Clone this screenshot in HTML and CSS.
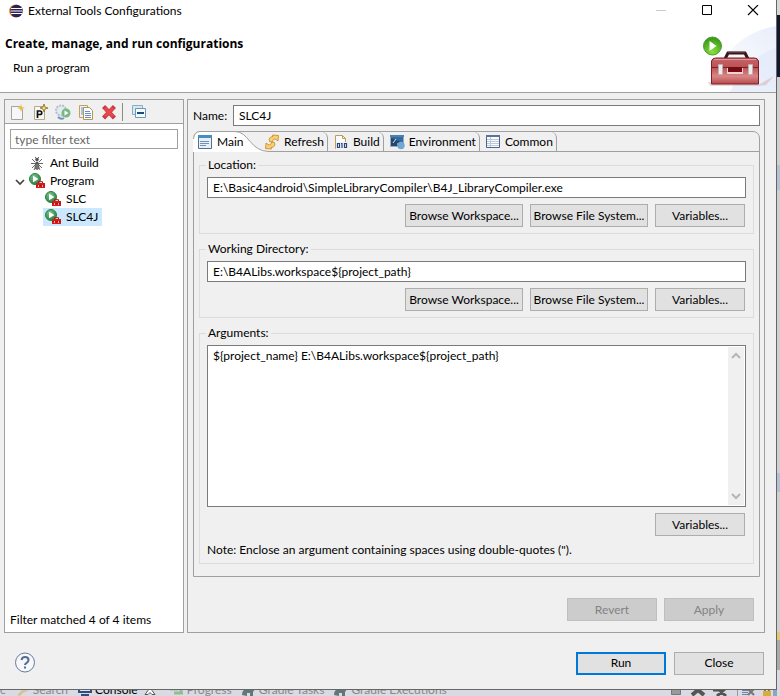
FILE: index.html
```
<!DOCTYPE html>
<html lang="en">
<head>
<meta charset="utf-8">
<title>External Tools Configurations</title>
<link rel="stylesheet" href="styles.css">
</head>
<body>
<svg class="defs" aria-hidden="true">
  <defs>
    <radialGradient id="green" cx=".4" cy=".3" r=".8"><stop offset="0" stop-color="#7cc58a"/><stop offset="1" stop-color="#1c7a35"/></radialGradient>
    <radialGradient id="lime" cx=".5" cy=".85" r=".9"><stop offset="0" stop-color="#8be03a"/><stop offset="1" stop-color="#2c8f10"/></radialGradient>
    <linearGradient id="box" x1="0" y1="0" x2="0" y2="1"><stop offset="0" stop-color="#c4666a"/><stop offset=".35" stop-color="#bd5055"/><stop offset=".7" stop-color="#d98686"/><stop offset="1" stop-color="#b8484c"/></linearGradient>
    <linearGradient id="swoosh" x1="0" y1="1" x2="1" y2="0"><stop offset="0" stop-color="#fff"/><stop offset="1" stop-color="#dfe7f8"/></linearGradient>
    <symbol id="runtool" viewBox="0 0 16 16">
      <circle cx="6" cy="6" r="5.500" fill="url(#green)" stroke="#2c8045"/>
      <path d="M4 2.800L9.500 6L4 9.200z" fill="#fff"/>
      <path d="M7 10h9v5H7z" fill="#d81a1a"/><path d="M9.500 10V8.700h4V10M7 12.500h9" fill="none" stroke="#a81515"/><path d="M9 12h1v2H9zM13 12h1v2h-1z" fill="#ffb0a0"/>
    </symbol>
  </defs>
</svg>
<div class="desktop">
  <main class="dialog">
    <header class="titlebar">
      <svg width="16" height="16" viewBox="0 0 16 16"><circle cx="7.500" cy="8" r="6.500" fill="#f09030"/><circle cx="8.500" cy="8" r="6.300" fill="#2c2255"/><path d="M3 5.500h11M2.500 8h12M3 10.500h11" stroke="#fff" stroke-width="1.200"/></svg>
      <h1>External Tools Configurations</h1>
      <div class="winbuttons">
        <button type="button" aria-label="Minimize"><svg width="12" height="12"><path d="M1 5.500h10" stroke="#ccc"/></svg></button>
        <button type="button" aria-label="Maximize"><svg width="12" height="12"><path d="M1.500 .5h9v9h-9z" fill="none" stroke="#000"/></svg></button>
        <button type="button" aria-label="Close window"><svg width="12" height="12"><path d="M1 0l10 10M11 0L1 10" stroke="#000" stroke-width="1.100"/></svg></button>
      </div>
    </header>
    <section class="banner">
      <div>
        <h2>Create, manage, and run configurations</h2>
        <p>Run a program</p>
      </div>
      <svg class="toolbox" width="76" height="71" viewBox="0 0 76 71">
        <path d="M8 71C20 30 46 10 76 5v66z" fill="url(#swoosh)" opacity=".7"/>
        <path d="M30 71C42 46 56 34 76 27v44z" fill="#dfe7f8" opacity=".6"/>
        <path d="M8 61l52 2 14-8-8 9-8 1H10z" fill="#b88" opacity=".3"/>
        <path d="M25 38l3-6h17l3 6" fill="none" stroke="#3d1418" stroke-width="3"/><path d="M28 31h17" stroke="#7c5c60"/>
        <path d="M11.500 63V40q1-3 4-3h39q3 0 4 3v23z" fill="url(#box)" stroke="#7e2026"/>
        <path d="M12 46.500h46" stroke="#7a2228"/><path d="M14 38.500h42" stroke="#dc9a9a"/>
        <path d="M27 47h16v6H27z" fill="#f1d0d0"/><path d="M28 46h14v5H28z" fill="#750c12"/>
        <path d="M18.500 43.500h4v10h-4zM48.500 43.500h4v10h-4z" fill="#efedec" stroke="#b9b2b0"/>
        <circle cx="12.500" cy="25" r="9" fill="url(#lime)" stroke="#4f9a3a"/>
        <path d="M9.500 20v10l7-5z" fill="#fff"/>
      </svg>
    </section>
    <div class="content">
      <aside class="tree-pane">
        <div class="toolbar">
          <button type="button" aria-label="New configuration"><svg width="16" height="16"><path d="M2.500 2.500h8l3 3v10h-11z" fill="#f4f7fb" stroke="#aaa58c"/><path d="M12 0l1 3 3 1-3 1-1 3-1-3-3-1 3-1z" fill="#e8bd48"/></svg></button>
          <button type="button" aria-label="New prototype"><svg width="16" height="16"><path d="M2.500 2.500h10v13h-10z" fill="#f4f7fb" stroke="#b9a978"/><path d="M5.500 14V7h2.500a1.500 1.500 0 010 3.500H6" fill="none" stroke="#111" stroke-width="1.700"/><path d="M12 0l1 3 3 1-3 1-1 3-1-3-3-1 3-1z" fill="#f7d877" stroke="#7b5c16" stroke-width=".7"/></svg></button>
          <button type="button" aria-label="Export"><svg width="16" height="16"><circle cx="6" cy="6.500" r="5" fill="#e5e9f0" stroke="#b6bfcd" stroke-width="2" stroke-dasharray="2 1"/><path d="M3 13q3 3 6 1" fill="none" stroke="#7892b5" stroke-width="2"/><circle cx="11" cy="9" r="4.500" fill="#76b887"/><path d="M9.500 6.500l4 2.500-4 2.500z" fill="#fff"/></svg></button>
          <button type="button" aria-label="Duplicate"><svg width="16" height="16"><path d="M1.500 1.500h8v12h-8z" fill="#edf3fb" stroke="#c1a45c"/><path d="M3 4h3M3 6h3M3 8h3M3 10h3" stroke="#6e8fc0"/><path d="M5.500 3.500h6l3 3v9h-9z" fill="#fafcff" stroke="#b7964b"/><path d="M7 7.500h5M7 9.500h6M7 11.500h6M7 13.500h6" stroke="#6e8fc0"/></svg></button>
          <button type="button" aria-label="Delete"><svg width="16" height="16"><path d="M4 4l8 8.500M12 4L4 12.500" stroke="#c63b42" stroke-width="4.200" stroke-linecap="square"/><path d="M4 4l8 8.500M12 4L4 12.500" stroke="#e5484d" stroke-width="3"/></svg></button>
          <span class="sep"></span>
          <button type="button" aria-label="Collapse all"><svg width="16" height="16"><path d="M1.500 1.500h10v9h-10z" fill="#d8e8f2" stroke="#8badc4"/><path d="M4.500 4.500h10v9h-10z" fill="#f5faff" stroke="#6d99b8"/><path d="M6 9h7" stroke="#184b80" stroke-width="2"/></svg></button>
        </div>
        <input class="filter" type="text" aria-label="Filter" placeholder="type filter text">
        <ul class="tree">
          <li><span class="twisty"></span><span class="node"><svg width="16" height="16"><path d="M6 2l2 2 2-2M3 4l3 3M13 4l-3 3M2 8.500h12M3 13l4-4M13 13L9 9M5 15l2-4M11 15l-2-4" stroke="#666" fill="none"/><circle cx="8" cy="4.500" r="1.800" fill="#555"/><circle cx="8" cy="8" r="1.600" fill="#555"/><ellipse cx="8" cy="12" rx="2" ry="2.500" fill="#777" stroke="#444" stroke-width=".6"/></svg>Ant Build</span></li>
          <li><svg class="twisty" width="10" height="18"><path d="M1 8l4 4 4-4" fill="none" stroke="#444" stroke-width="1.700"/></svg><span class="node"><svg width="16" height="16"><use href="#runtool"/></svg>Program</span></li>
          <li class="child"><span class="node"><svg width="16" height="16"><use href="#runtool"/></svg>SLC</span></li>
          <li class="child"><span class="node selected"><svg width="16" height="16"><use href="#runtool"/></svg>SLC4J</span></li>
        </ul>
        <p class="status">Filter matched 4 of 4 items</p>
      </aside>
      <section class="editor">
        <div class="name-row"><label for="name">Name:</label><input id="name" type="text" value="SLC4J"></div>
        <div class="folder">
          <div class="tabs" role="tablist">
            <button class="tab active" type="button" role="tab" aria-selected="true">
              <svg class="curve" width="76" height="21" viewBox="0 0 76 21"><path d="M0 21V7Q1 1 7 .5H42C56 .5 57 20.500 76 20.500V21z" fill="#fff"/><path d="M.5 8Q1 1 7 .5H42C56 .5 57 20.500 76 20.500" fill="none" stroke="#a0a0a0"/></svg>
              <svg width="16" height="16"><path d="M1.500 1.500h13v13h-13z" fill="#e5f0fa" stroke="#51718e"/><path d="M1 1h14v3H1z" fill="#438fc4"/><path d="M3 7.500h9M3 9.500h9M3 11.500h6" stroke="#7790b5"/></svg><span>Main</span></button>
            <button class="tab" type="button" role="tab"><svg width="16" height="16"><path d="M5.500 7.500Q4 3 9 2.500L8.500 1l6 .5L14 7l-2-1.500Q9 4 8.500 8z" fill="#f8cf72" stroke="#c68523" stroke-width=".8"/><path d="M10.500 8.500q1.500 4.500-3.500 5l.5 1.500-6-.5L2 9l2 1.500q3 1.500 3.500-2.500z" fill="#f8cf72" stroke="#c68523" stroke-width=".8"/></svg><span>Refresh</span></button>
            <button class="tab" type="button" role="tab"><svg width="16" height="16"><path d="M2.500 1.500h7l3 3v10h-10z" fill="#fafcff" stroke="#c09c52"/><path d="M9.500 1.500v3h3" fill="none" stroke="#c09c52"/><path d="M3 8h11v7H3z" fill="#f2f3f7"/><path d="M4.500 9.500h2v4h-2zM11.500 9.500h2v4h-2zM9 9v5M8 9.500h1" fill="none" stroke="#294779" stroke-width="1.200"/></svg><span>Build</span></button>
            <button class="tab" type="button" role="tab"><svg width="16" height="16"><path d="M1.500 1.500h13v11h-13z" fill="#346a9f" stroke="#9aabba"/><path d="M1 1h14v2H1z" fill="#4b81b2"/><path d="M2 4q6 2 12 5v3H2z" fill="#24466f"/><path d="M4 9l3-4M8 10h3" stroke="#dce8f3"/><circle cx="12" cy="11.500" r="3.700" fill="#70a7d4"/></svg><span>Environment</span></button>
            <button class="tab" type="button" role="tab"><svg width="16" height="16"><path d="M1.500 1.500h13v12h-13z" fill="#f9fbff" stroke="#4d638e"/><path d="M1 1h14v2H1z" fill="#5d7298"/><path d="M5.500 3v10M2 5.500h12M2 7.500h12M2 9.500h12M2 11.500h12" stroke="#bdc7d8"/></svg><span>Common</span></button>
          </div>
          <div class="panel">
            <fieldset><legend>Location:</legend>
              <input type="text" aria-label="Location" value="E:\Basic4android\SimpleLibraryCompiler\B4J_LibraryCompiler.exe">
              <div class="actions"><button type="button" class="btn wide">Browse Workspace...</button><button type="button" class="btn wide">Browse File System...</button><button type="button" class="btn">Variables...</button></div>
            </fieldset>
            <fieldset><legend>Working Directory:</legend>
              <input type="text" aria-label="Working Directory" value="E:\B4ALibs.workspace${project_path}">
              <div class="actions"><button type="button" class="btn wide">Browse Workspace...</button><button type="button" class="btn wide">Browse File System...</button><button type="button" class="btn">Variables...</button></div>
            </fieldset>
            <fieldset class="arguments"><legend>Arguments:</legend>
              <div class="textarea">
                <textarea aria-label="Arguments">${project_name} E:\B4ALibs.workspace${project_path}</textarea>
                <div class="scroll"><svg width="10" height="8"><path d="M1 6l4-4 4 4" fill="none" stroke="#b5b5b5" stroke-width="2"/></svg><svg width="10" height="8"><path d="M1 2l4 4 4-4" fill="none" stroke="#b5b5b5" stroke-width="2"/></svg></div>
              </div>
              <div class="actions"><button type="button" class="btn">Variables...</button></div>
              <p>Note: Enclose an argument containing spaces using double-quotes (").</p>
            </fieldset>
          </div>
        </div>
        <div class="apply-row"><button type="button" class="btn" disabled>Revert</button><button type="button" class="btn" disabled>Apply</button></div>
      </section>
    </div>
    <footer>
      <button class="help" type="button" aria-label="Help"><svg width="22" height="22"><circle cx="11" cy="10.500" r="9.500" fill="#f5f7fa" stroke="#667b9c"/><path d="M7.500 8Q8 5 11 5q3.500 0 3.500 3 0 2-2 3-1.500 1-1.500 2M11 14.500v2" fill="none" stroke="#536b92" stroke-width="2"/></svg></button>
      <button type="button" class="btn default">Run</button><button type="button" class="btn">Close</button>
    </footer>
  </main>
  <div class="side"></div>
  <div class="views">
    <span>c</span>
    <svg width="16" height="16"><path d="M2 15l8-8 4 3-6 3-3 3z" fill="#d6c39c"/></svg><span>Search</span>
    <svg width="16" height="16"><path d="M2 5h12v7H2zM4 15h8" fill="#d8e6f7" stroke="#2d5080" stroke-width="2"/></svg><span class="on">Console</span>
    <svg class="tight" width="16" height="16"><path d="M3 6.500h3l2 2 2-2h3l-3 4 3 4h-3l-2-2-2 2H3l3-4z" fill="#fff" stroke="#555"/></svg>
    <svg width="16" height="16"><path d="M1 9h8M5 13h9M12 10v4" stroke="#91bd96" stroke-width="3"/></svg><span>Progress</span>
    <svg width="16" height="16"><path d="M1 15q0-7 7-6 3-3 6 0l-2 3v4H9v-3H6v3z" fill="#60777c"/></svg><span>Gradle Tasks</span>
    <svg width="16" height="16"><path d="M1 15q0-7 7-6 3-3 6 0l-2 3v4H9v-3H6v3z" fill="#60777c"/></svg><span>Gradle Executions</span>
    <div class="viewtools">
      <svg width="16" height="16"><path d="M3.500 8.500h9v6h-9z" fill="#999" stroke="#777"/></svg>
      <svg width="16" height="16"><path d="M2 15l6-5 6 5" fill="none" stroke="#555" stroke-width="4"/></svg>
      <svg width="18" height="16"><path d="M5 8l9 8M14 8l-9 8M1 10h6" stroke="#555" stroke-width="3"/></svg>
      <svg width="20" height="16"><path d="M1.500 8v8" stroke="#999"/><path d="M6 10.500h8M6 12.500h6M6 14.500h7" stroke="#6886aa"/><path d="M12 9l6 6M18 9l-6 6" stroke="#777" stroke-width="2"/></svg>
      <svg width="18" height="16"><path d="M3 11v-1q2-3 4 0v1" fill="none" stroke="#8a7641" stroke-width="2"/><path d="M1 11h8v5H1z" fill="#d8ad3a"/><path d="M11 8h4v8h-4z" fill="#8ba6c5"/></svg>
    </div>
  </div>
</div>
</body>
</html>
```
FILE: styles.css
```
* { box-sizing: border-box; }
body { margin: 0; font: 12px/18px Lato, "Open Sans", sans-serif; color: #000; }
button, input, textarea { font: inherit; color: inherit; margin: 0; border-radius: 0; }
button { padding: 0; border: 0; background: none; }
h1, h2, p, ul, fieldset { margin: 0; padding: 0; }
svg { flex: none; display: block; }
.defs { position: absolute; width: 0; height: 0; }
.desktop { display: grid; grid-template-columns: 1fr 3px; grid-template-rows: 1fr 6px; height: 100vh; overflow: hidden; background: #d8dae4; }
.dialog { display: flex; flex-direction: column; min-width: 0; background: #f0f0f0; border-right: 1px solid #666; border-bottom: 1px solid #666; }
.titlebar { display: flex; align-items: center; height: 21px; background: #fff; padding-left: 8px; }
.titlebar h1 { font-size: 12px; font-weight: 400; margin-left: 4px; flex: 1; }
.winbuttons { display: flex; gap: 34px; padding-right: 17px; }
.banner { display: flex; justify-content: space-between; height: 72px; background: #fff; border-bottom: 1px solid #a0a0a0; padding-left: 5px; }
.banner h2 { font: 700 12px/18px "Open Sans", sans-serif; margin-top: 14px; }
.banner p { margin: 6px 0 0 8px; }
.content { display: flex; flex: 1; gap: 3px; padding: 6px 11px 0 4px; min-height: 0; }
.tree-pane { display: flex; flex-direction: column; width: 180px; flex: none; border: 1px solid #a0a0a0; background: #fff; }
.toolbar { display: flex; align-items: center; gap: 7px; height: 24px; padding-left: 4px; background: #f0f0f0; border-bottom: 1px solid #a0a0a0; }
.sep { width: 1px; height: 18px; margin: 0 1px 0 -2px; background: #8a8a8a; }
.filter { margin: 5px; height: 20px; border: 1px solid #a0a0a0; padding: 0 4px; }
.filter::placeholder { color: #666; opacity: 1; }
.tree { list-style: none; }
.tree li { display: flex; height: 18px; padding-left: 10px; gap: 2px; }
.tree .twisty { width: 10px; }
.tree li.child { padding-left: 38px; }
.node { display: flex; align-items: center; gap: 5px; padding: 0 4px 0 2px; }
.selected { background: #cce8ff; }
.status { margin-top: auto; padding: 0 5px 3px; }
.editor { display: flex; flex-direction: column; flex: 1; min-width: 0; border: 1px solid #a0a0a0; padding: 5px 4px 0 5px; }
.name-row { display: flex; align-items: center; }
.name-row label { width: 40px; }
.name-row input { flex: 1; }
input[type="text"] { min-width: 0; background: #fff; outline: 0; }
.name-row input, fieldset input { height: 21px; border: 1px solid #7a7a7a; padding: 0 5px; }
.folder { display: flex; flex-direction: column; flex: 1; margin-top: 5px; border: 1px solid #a0a0a0; border-radius: 7px 7px 0 0; }
.tabs { display: flex; height: 20px; border-bottom: 1px solid #a0a0a0; }
.tab { position: relative; display: flex; align-items: center; gap: 4px; height: 19px; padding: 0 3px 0 5px; border-right: 1px solid #a0a0a0; border-top-right-radius: 6px; }
.tab svg, .tab span { position: relative; }
.tab.active { width: 65px; padding-left: 3px; border: 0; z-index: 1; }
.tab .curve { position: absolute; left: -1px; top: -1px; }
.panel { display: flex; flex-direction: column; flex: 1; padding: 4px 5px 12px; }
fieldset { display: flex; flex-direction: column; min-width: 0; border: 1px solid #dcdcdc; padding: 3px 7px 6px; margin-bottom: 6px; }
legend { line-height: 18px; padding: 0 2px; margin-left: -1px; }
.actions { display: flex; justify-content: flex-end; gap: 7px; margin-top: 6px; padding-right: 1px; }
.btn { height: 23px; min-width: 90px; padding: 0; border: 1px solid #adadad; background: #e1e1e1; white-space: nowrap; }
.btn.wide { min-width: 118px; }
.btn:disabled { background: #ccc; border-color: #bfbfbf; color: #838383; }
.btn.default { border: 2px solid #0078d7; }
.arguments { flex: 1; margin: 0; padding-bottom: 4px; }
.textarea { display: flex; height: 162px; border: 1px solid #7a7a7a; background: #fff; }
textarea { flex: 1; border: 0; padding: 1px 5px; resize: none; outline: 0; background: none; overflow: hidden; }
.scroll { display: flex; flex-direction: column; justify-content: space-between; align-items: center; width: 16px; margin: 1px; padding: 5px 0; background: #f0f0f0; }
.arguments p { margin-top: 5px; }
.apply-row { display: flex; justify-content: flex-end; gap: 7px; padding: 21px 6px 11px; }
footer { display: flex; align-items: center; gap: 8px; height: 56px; padding: 4px 12px 0 14px; }
.help { margin-right: auto; }
.side { background: linear-gradient(#d8d8d8 0 15px, #14182c 15px 77px, #d0d0d0 77px 165px, #b4c0d4 165px 190px, #d0d0d0 190px 473px, #b4c0d4 473px 492px, #d0d0d0 492px 632px, #e0c878 632px 640px, #aaa 640px 670px, #d8dae4 670px); }
.views { grid-column: 1 / -1; display: flex; align-items: flex-end; height: 6px; overflow: hidden; color: #888; background: #d8dae4; }
.views span { line-height: 12px; }
.views > svg { margin-left: 9px; margin-right: 2px; }
.views > .tight { margin-left: 4px; }
.views .on { color: #000; }
.viewtools { display: flex; gap: 6px; margin-left: auto; }
```
